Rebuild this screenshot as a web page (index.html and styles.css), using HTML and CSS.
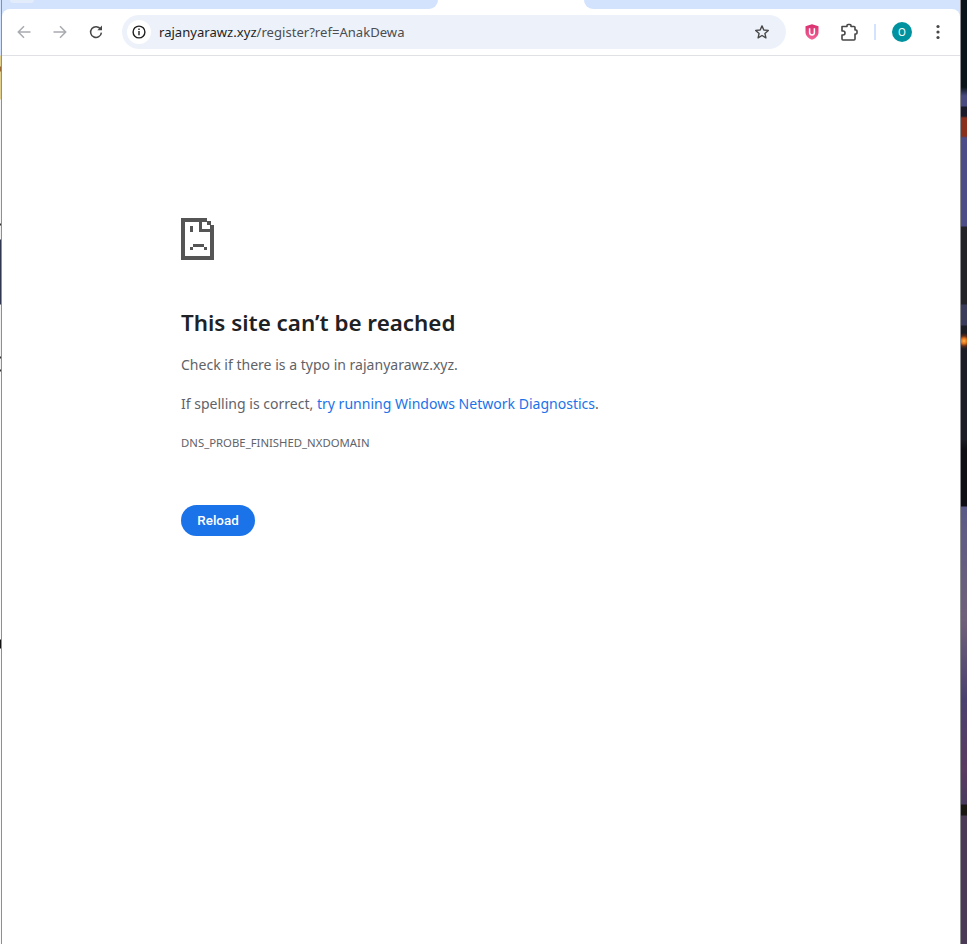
FILE: index.html
```html
<!DOCTYPE html>
<html lang="en">
<head>
<meta charset="utf-8">
<title>rajanyarawz.xyz</title>
<link rel="stylesheet" href="styles.css">
</head>
<body>
<div class="desktop">
  <div class="edge-left"></div>
  <div class="window">
    <div class="tabrow">
      <div class="seg seg-left"><span class="tab-hint"></span></div>
      <div class="tab-active"></div>
      <div class="seg seg-right"></div>
    </div>
    <div class="toolbar">
      <button class="tbtn" aria-label="Back">
        <svg width="16" height="16" viewBox="0 0 16 16" class="dim"><path d="M14.5 8H2.5M8 2.2 2.3 8 8 13.8" fill="none" stroke="currentColor" stroke-width="1.5"/></svg>
      </button>
      <button class="tbtn" aria-label="Forward">
        <svg width="16" height="16" viewBox="0 0 16 16" class="dim"><path d="M1.5 8h12M8 2.2 13.7 8 8 13.8" fill="none" stroke="currentColor" stroke-width="1.5"/></svg>
      </button>
      <button class="tbtn" aria-label="Reload">
        <svg width="16" height="16" viewBox="0 0 16 16"><path d="M12.6 5.2A5.4 5.4 0 1 0 13.4 8.6" fill="none" stroke="currentColor" stroke-width="1.5"/><path d="M9.4 6.2h4.6V1.6z" fill="currentColor"/></svg>
      </button>
      <div class="omnibox">
        <span class="site-info">
          <svg width="14" height="14" viewBox="0 0 14 14"><circle cx="7" cy="7" r="5.9" fill="none" stroke="currentColor" stroke-width="1.4"/><path d="M6.3 6h1.4v4.2H6.3zM6.3 3.6h1.4V5H6.3z" fill="currentColor"/></svg>
        </span>
        <span class="url">rajanyarawz.xyz<span class="url-path">/register?ref=AnakDewa</span></span>
        <svg class="star" width="16" height="16" viewBox="0 0 16 16"><path d="M8 1.9 9.8 6l4.5.4-3.4 3 1 4.4L8 11.5l-3.9 2.3 1-4.4-3.4-3L6.200 6z" fill="none" stroke="currentColor" stroke-width="1.4" stroke-linejoin="round"/></svg>
      </div>
      <button class="tbtn ext" aria-label="uBlock">
        <svg width="14" height="16" viewBox="0 0 14 16"><defs><linearGradient id="shield" x1="0" y1="0" x2="0" y2="1"><stop offset="0" stop-color="#d92d6e"/><stop offset="1" stop-color="#f2669a"/></linearGradient></defs><path d="M7 .3 13.500 2.300V8.500C13.500 12 10 14.600 7 15.800 4 14.600.5 12 .5 8.500V2.300z" fill="url(#shield)"/><path d="M4.600 4.200v4.400a2.400 2.400 0 0 0 4.800 0V4.200" fill="none" stroke="#fff" stroke-width="1.500"/></svg>
      </button>
      <button class="tbtn puzzle" aria-label="Extensions">
        <svg width="18" height="18" viewBox="0 0 18 18"><path d="M2 3.500H7V2.500a1 1 0 0 1 1-1h2a1 1 0 0 1 1 1v1H14a1 1 0 0 1 1 1V7h1a1 1 0 0 1 1 1v2a1 1 0 0 1-1 1h-1v5a1 1 0 0 1-1 1H3a1 1 0 0 1-1-1v-4h1a2 2 0 0 0 0-4H2z" fill="none" stroke="currentColor" stroke-width="1.600" stroke-linejoin="round"/></svg>
      </button>
      <span class="divider"></span>
      <button class="tbtn avatar-btn" aria-label="Profile"><span class="avatar">O</span></button>
      <button class="tbtn" aria-label="Menu">
        <svg width="4" height="16" viewBox="0 0 4 16"><circle cx="2" cy="2.500" r="1.600" fill="currentColor"/><circle cx="2" cy="8" r="1.600" fill="currentColor"/><circle cx="2" cy="13.500" r="1.600" fill="currentColor"/></svg>
      </button>
    </div>
    <main class="page">
      <svg class="sad-file" width="34" height="42" viewBox="0 0 34 42" shape-rendering="crispEdges" aria-hidden="true">
        <path fill="#555" d="M0 0h26v4H0zM0 0h4v42H0zM0 38h33v4H0zM29 7h4v35h-4zM26 3h4v4h-4zM18 0h3v14h-3zM18 11h15v3H18z"/>
        <path fill="#555" d="M9 8h3v6H9zM12 26h11v3H12zM9 29h3v3H9zM23 29h3v3h-3z"/>
      </svg>
      <h1 class="title">This site can’t be reached</h1>
      <p class="body-text">Check if there is a typo in rajanyarawz.xyz.</p>
      <p class="body-text second">If spelling is correct, <a class="link" href="#">try running Windows Network Diagnostics</a>.</p>
      <div class="error-code">DNS_PROBE_FINISHED_NXDOMAIN</div>
      <button class="reload">Reload</button>
    </main>
  </div>
  <div class="edge-right"></div>
</div>
</body>
</html>
```
FILE: styles.css
```css
html, body {
  margin: 0;
  padding: 0;
  height: 100%;
  overflow: hidden;
}
.desktop {
  display: flex;
  width: 967px;
  height: 944px;
  background: #111;
}
.edge-left {
  width: 2px;
  flex: none;
  background:
    linear-gradient(to right, transparent 0 1px, #8f8f8f 1px 2px),
    linear-gradient(to bottom,
      #d3e3fd 0, #d3e3fd 55px,
      #e2cf8e 56px, #e2cf8e 66px,
      #9a6a30 67px, #9a6a30 71px,
      #e2cf8e 72px, #e2cf8e 99px,
      #f4f4f4 100px, #f4f4f4 223px,
      #333 224px, #333 225px,
      #f0f0f0 226px, #f0f0f0 239px,
      #2f3850 240px, #2f3850 304px,
      #f0f0f0 305px, #f0f0f0 356px,
      #333 357px, #333 358px,
      #f0f0f0 359px, #f0f0f0 369px,
      #333 370px, #333 371px,
      #fafafa 372px, #fafafa 639px,
      #111 640px, #111 648px,
      #fafafa 649px, #fafafa 944px);
}
.edge-right {
  flex: 1;
  background:
    radial-gradient(circle 8px at 3px 341px, #ffb347 0, #e0701a 35%, rgba(120, 50, 20, .7) 65%, transparent 100%),
    linear-gradient(to bottom,
      #0b1418 0, #0b1418 87px,
      #4a4a80 96px, #4a4a80 106px,
      #1a1a28 107px, #1a1a28 116px,
      #8a2f1c 118px, #8a2f1c 136px,
      #4c4c88 138px, #4c4c88 226px,
      #222228 227px, #222228 304px,
      #3a3a5a 305px, #3a3a5a 325px,
      #1c1c24 326px, #1c1c24 440px,
      #0e0e14 450px, #0e0e14 506px,
      #5a5a88 507px, #70607a 620px, #4a4070 700px, #5a3a60 770px, #4a3a60 804px,
      #1a1612 805px, #1a1612 815px,
      #4a3a55 816px, #4a3a55 944px);
  border-left: 1px solid #8f8f94;
}
.window {
  width: 958px;
  flex: none;
  display: flex;
  flex-direction: column;
  background: #d3e3fd;
}
.tabrow {
  display: flex;
  height: 9px;
  flex: none;
  background: #fff;
}
.seg {
  background: #d3e3fd;
  height: 9px;
}
.seg-left {
  width: 436px;
  border-bottom-right-radius: 9px;
  padding-left: 8px;
  box-sizing: border-box;
}
.tab-hint {
  display: block;
  width: 24px;
  height: 3px;
  background: #e3ecfb;
  border-radius: 0 0 5px 5px;
}
.tab-active {
  width: 146px;
  background: #fff;
}
.seg-right {
  flex: 1;
  border-bottom-left-radius: 9px;
}
.toolbar {
  display: flex;
  align-items: center;
  height: 47px;
  flex: none;
  box-sizing: border-box;
  padding: 0 0 1px 4px;
  background: #fff;
  border-radius: 8px 8px 0 0;
  border-bottom: 1px solid #dfe1e5;
  color: #474747;
}
.tbtn {
  width: 36px;
  height: 34px;
  flex: none;
  padding: 0;
  border: 0;
  background: none;
  color: inherit;
  display: flex;
  align-items: center;
  justify-content: center;
}
.dim {
  color: #a8abaf;
}
.omnibox {
  margin-left: 8px;
  width: 664px;
  height: 34px;
  flex: none;
  display: flex;
  align-items: center;
  box-sizing: border-box;
  padding: 0 16px 0 5px;
  background: #edf2fa;
  border-radius: 17px;
}
.site-info {
  width: 24px;
  height: 24px;
  flex: none;
  border-radius: 50%;
  background: #fff;
  display: flex;
  align-items: center;
  justify-content: center;
  color: #1f1f1f;
}
.url {
  margin-left: 8px;
  flex: 1;
  font: 13.1px "Noto Sans", sans-serif;
  color: #1f1f1f;
}
.url-path {
  color: #4a4d51;
}
.star {
  flex: none;
}
.ext {
  margin-left: 8px;
}
.puzzle {
  margin-left: 1px;
}
.divider {
  width: 2px;
  height: 16px;
  margin: 0 8px 0 7px;
  background: #d3e3fd;
  flex: none;
}
.avatar {
  width: 20px;
  height: 20px;
  border-radius: 50%;
  background: #00939f;
  color: #fff;
  font: 10px/20px "Noto Sans", sans-serif;
  text-align: center;
}
.page {
  flex: 1;
  background: #fff;
  padding: 162px 0 0 179px;
  font-family: "Noto Sans", sans-serif;
  color: #5f6368;
}
.sad-file {
  display: block;
}
.title {
  margin: 47px 0 0;
  font-size: 22.4px;
  line-height: 32px;
  font-weight: 600;
  color: #202124;
}
.body-text {
  margin: 15px 0 0;
  font-size: 14.04px;
  line-height: 22px;
}
.body-text.second {
  margin-top: 17px;
}
.link {
  color: #1a73e8;
  text-decoration: none;
}
.error-code {
  margin-top: 20px;
  font-size: 11.35px;
  line-height: 16px;
}
.reload {
  display: block;
  margin-top: 54px;
  width: 74px;
  height: 31px;
  padding: 0;
  border: 0;
  border-radius: 16px;
  background: #1a73e8;
  color: #fff;
  font: 500 13.4px "Roboto", sans-serif;
}
```
